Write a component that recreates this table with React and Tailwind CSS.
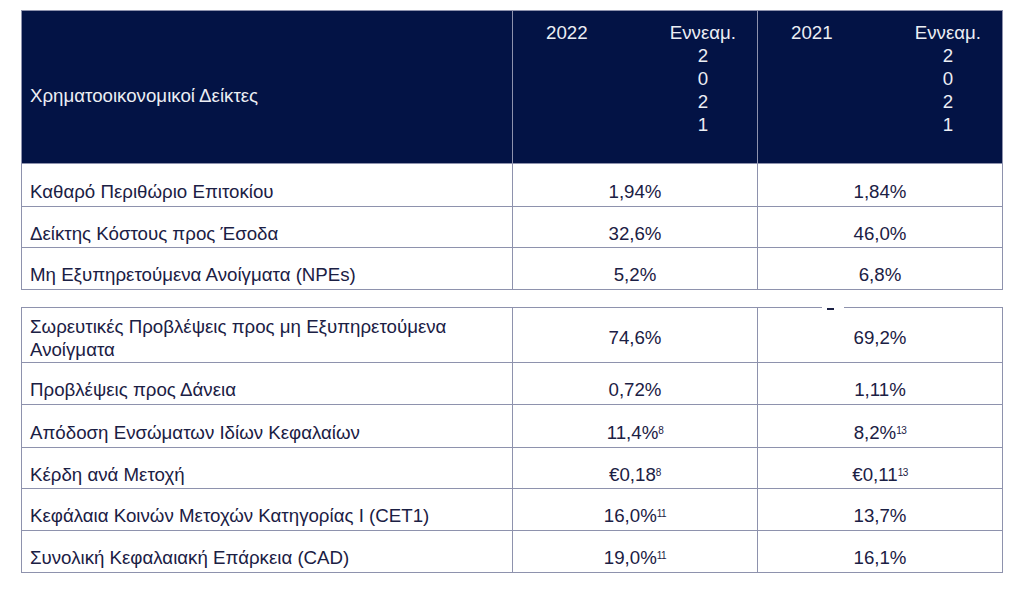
import React from 'react'

const tableOne = [
  { label: 'Καθαρό Περιθώριο Επιτοκίου', a: '1,94%', b: '1,84%', h: 'h-[43px]' },
  { label: 'Δείκτης Κόστους προς Έσοδα', a: '32,6%', b: '46,0%', h: 'h-[41px]' },
  { label: 'Μη Εξυπηρετούμενα Ανοίγματα (NPEs)', a: '5,2%', b: '6,8%', h: 'h-[42px]' },
]

const tableTwo = [
  { label: 'Προβλέψεις προς Δάνεια', a: '0,72%', b: '1,11%', h: 'h-[42px]' },
  { label: 'Απόδοση Ενσώματων Ιδίων Κεφαλαίων', a: '11,4%', as: '8', b: '8,2%', bs: '13', h: 'h-[43px]' },
  { label: 'Κέρδη ανά Μετοχή', a: '€0,18', as: '8', b: '€0,11', bs: '13', h: 'h-[41px]' },
  { label: 'Κεφάλαια Κοινών Μετοχών Κατηγορίας Ι (CET1)', a: '16,0%', as: '11', b: '13,7%', h: 'h-[42px]' },
  { label: 'Συνολική Κεφαλαιακή Επάρκεια (CAD)', a: '19,0%', as: '11', b: '16,1%', h: 'h-[42px]' },
]

const cell = 'border-r border-b border-[#8e92ad] flex items-center'

const Value = ({ text, sup }) => (
  <span>
    {text}
    {sup ? <span className="text-[10px] tracking-[-0.5px] align-top relative -top-[2px]">{sup}</span> : null}
  </span>
)

const Row = ({ row, pad = 'pt-[12px]' }) => (
  <>
    <div className={`${cell} ${row.h} ${pad} pl-[8px]`}>{row.label}</div>
    <div className={`${cell} ${row.h} ${pad} justify-center`}>
      <Value text={row.a} sup={row.as} />
    </div>
    <div className={`${cell} ${row.h} ${pad} justify-center`}>
      <Value text={row.b} sup={row.bs} />
    </div>
  </>
)

const YearHead = ({ year }) => (
  <div className="border-r border-b border-[#8e92ad] h-[153px] flex justify-between items-start pl-[33px] pr-[21px] pt-[10px]">
    <span>{year}</span>
    <div className="flex flex-col items-center">
      {['Εννεαμ.', '2', '0', '2', '1'].map((t, i) => (
        <span key={i}>{t}</span>
      ))}
    </div>
  </div>
)

export default function App() {
  return (
    <div
      className="w-[1029px] h-[598px] bg-white text-[#1b2044] text-[18.7px] leading-[23px]"
      style={{ fontFamily: '"Liberation Sans", Arial, sans-serif' }}
    >
      <div className="pt-[10px] pl-[21px]">
        <div className="grid grid-cols-[491px_245px_245px] w-[982px] border-l border-t border-[#8e92ad]">
          <div className="bg-[#031345] text-[#eceef4] border-r border-b border-[#8e92ad] h-[153px] flex items-center pt-[16px] pl-[8px]">
            Χρηματοοικονομικοί Δείκτες
          </div>
          <div className="bg-[#031345] text-[#eceef4]">
            <YearHead year="2022" />
          </div>
          <div className="bg-[#031345] text-[#eceef4]">
            <YearHead year="2021" />
          </div>
          {tableOne.map((row) => (
            <Row key={row.label} row={row} />
          ))}
        </div>

        <div className="relative mt-[17px] grid grid-cols-[491px_245px_245px] w-[982px] border-l border-t border-[#8e92ad]">
          <div className="absolute -top-[1px] left-[800px] w-[22px] h-[1px] bg-white" />
          <div className="absolute top-[0px] left-[805px] w-[7px] h-[2px] bg-[#1b2044]" />
          <div className={`${cell} h-[55px] pt-[5px] pl-[8px]`}>
            <span>
              Σωρευτικές Προβλέψεις προς μη Εξυπηρετούμενα
              <br />
              Ανοίγματα
            </span>
          </div>
          <div className={`${cell} h-[55px] pt-[5px] justify-center`}>74,6%</div>
          <div className={`${cell} h-[55px] pt-[5px] justify-center`}>69,2%</div>
          {tableTwo.map((row) => (
            <Row key={row.label} row={row} />
          ))}
        </div>
      </div>
    </div>
  )
}
